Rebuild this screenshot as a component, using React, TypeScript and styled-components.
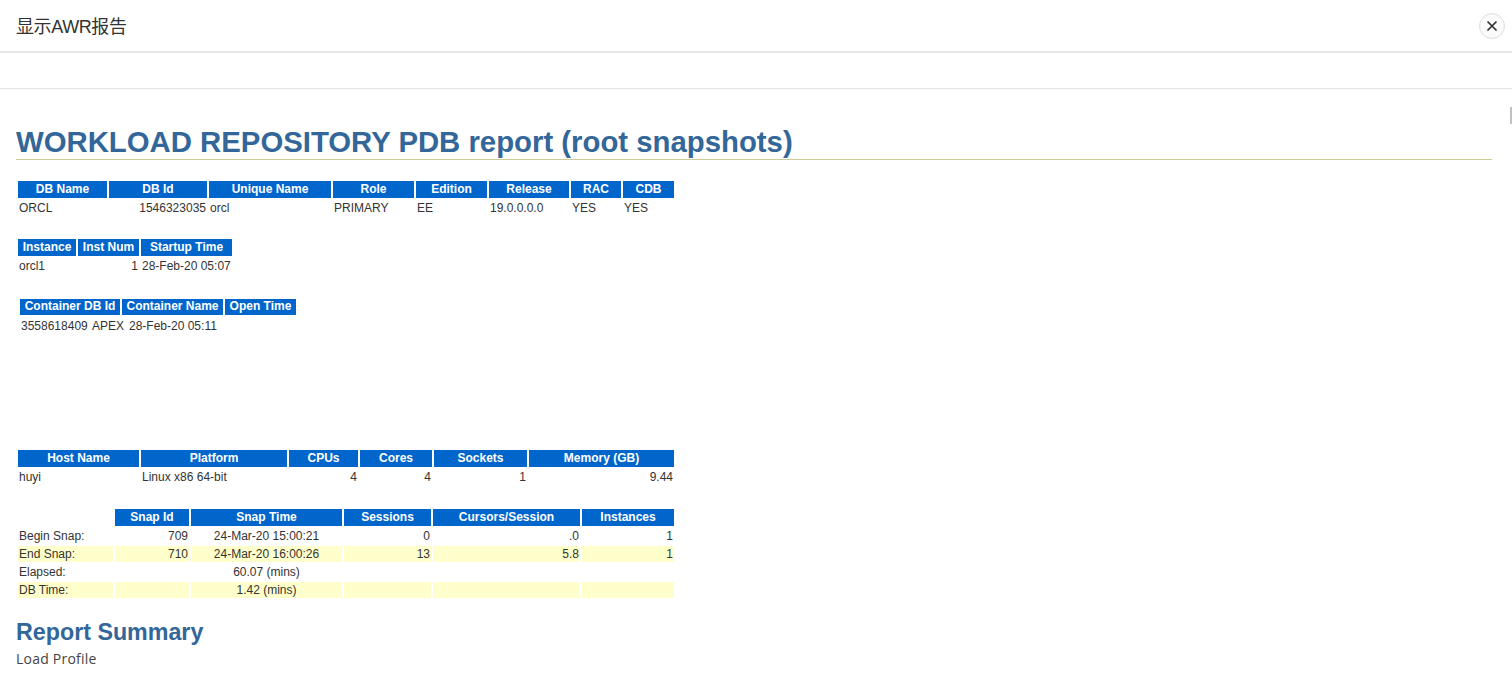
import React from "react";
import styled, { createGlobalStyle } from "styled-components";

const Global = createGlobalStyle`
  html, body { margin: 0; padding: 0; background: #fff; height: 680px; overflow: hidden; }
`;

const Page = styled.div`
  position: relative;
  display: flex;
  flex-direction: column;
  width: 1512px;
  height: 680px;
  overflow: hidden;
  background: #fff;
  font-family: "Liberation Sans", "Noto Sans CJK SC", sans-serif;
`;

const Header = styled.header`
  flex: none;
  height: 51px;
  display: flex;
  align-items: center;
  justify-content: space-between;
  padding: 0 7px 0 16px;
  border-bottom: 2px solid #e5e5e5;
`;

const ModalTitle = styled.h4`
  margin: 0 0 2px;
  font-size: 18px;
  font-weight: 400;
  letter-spacing: -0.4px;
  color: #333;
`;

const CloseButton = styled.button`
  width: 26px;
  height: 26px;
  padding: 0;
  display: flex;
  align-items: center;
  justify-content: center;
  border-radius: 50%;
  border: 1px solid #ddd;
  background: #fafafa;
  color: #333;
`;

const Toolbar = styled.div`
  flex: none;
  height: 35px;
  border-bottom: 1px solid #e5e5e5;
  box-shadow: 0 1px 2px rgba(0, 0, 0, 0.03);
`;

const Report = styled.main`
  flex: 1;
  padding: 0 20px 0 16px;
`;

const Title = styled.h1`
  margin: 35px 0 0;
  height: 35px;
  font-size: 29.33px;
  line-height: 35px;
  font-weight: 700;
  color: #336699;
  border-bottom: 1px solid #cccc99;
`;

const Table = styled.table<{ $top: number; $left?: number }>`
  margin: ${(p) => p.$top}px 0 0 ${(p) => p.$left ?? 0}px;
  border-collapse: separate;
  border-spacing: 2px;
  font-size: 12px;
`;

const Th = styled.th<{ $w: number; $h?: number }>`
  width: ${(p) => p.$w}px;
  min-width: ${(p) => p.$w}px;
  max-width: ${(p) => p.$w}px;
  box-sizing: border-box;
  height: ${(p) => p.$h ?? 17}px;
  padding: 0 0 2px;
  background: #0066cc;
  color: #fff;
  font-weight: 700;
  text-align: center;
  white-space: nowrap;
`;

const Blank = styled.td<{ $w: number }>`
  width: ${(p) => p.$w}px;
  padding: 0;
`;

const Td = styled.td<{ $align?: string; $alt?: boolean; $h?: number; $w?: number }>`
  box-sizing: border-box;
  height: ${(p) => p.$h ?? 16}px;
  ${(p) => (p.$w ? `width: ${p.$w}px; min-width: ${p.$w}px;` : "")}
  padding: 0 1px;
  color: #333;
  white-space: nowrap;
  text-align: ${(p) => p.$align ?? "left"};
  background: ${(p) => (p.$alt ? "#ffffcc" : "transparent")};
`;

const Section = styled.h2`
  margin: 18px 0 0;
  font-size: 23.25px;
  line-height: 28px;
  font-weight: 700;
  color: #336699;
`;

const Sub = styled.div`
  margin-top: 3px;
  font-family: "Open Sans", sans-serif;
  font-size: 14px;
  line-height: 20px;
  letter-spacing: 0.22px;
  color: #444;
`;

const ScrollMark = styled.div`
  position: absolute;
  right: 0;
  top: 107px;
  width: 2px;
  height: 17px;
  background: #c1c1c1;
`;

type Row = (string | [string, string])[];

function Cells({ cells, alt }: { cells: Row; alt?: boolean }) {
  return (
    <tr>
      {cells.map((c, i) =>
        Array.isArray(c) ? (
          <Td key={i} $align={c[1]} $alt={alt}>{c[0]}</Td>
        ) : (
          <Td key={i} $alt={alt}>{c}</Td>
        )
      )}
    </tr>
  );
}

function Heads({ cols, h, blank }: { cols: [string, number][]; h?: number; blank?: number }) {
  return (
    <tr>
      {blank ? <Blank $w={blank} /> : null}
      {cols.map(([t, w]) => (
        <Th key={t} $w={w} $h={h}>{t}</Th>
      ))}
    </tr>
  );
}

export default function App() {
  return (
    <Page>
      <Global />
      <Header>
        <ModalTitle>显示AWR报告</ModalTitle>
        <CloseButton aria-label="关闭">
          <svg width="12" height="12" viewBox="0 0 12 12" fill="none" stroke="currentColor" strokeWidth="1.7">
            <path d="M1.5 1.5l9 9M10.5 1.5l-9 9" />
          </svg>
        </CloseButton>
      </Header>
      <Toolbar />
      <Report>
        <Title>WORKLOAD REPOSITORY PDB report (root snapshots)</Title>
        <Table $top={19}>
          <tbody>
            <Heads cols={[["DB Name", 89], ["DB Id", 98], ["Unique Name", 122], ["Role", 81], ["Edition", 71], ["Release", 80], ["RAC", 50], ["CDB", 51]]} />
            <Cells cells={["ORCL", ["1546323035", "right"], "orcl", "PRIMARY", "EE", "19.0.0.0.0", "YES", "YES"]} />
          </tbody>
        </Table>
        <Table $top={19}>
          <tbody>
            <Heads cols={[["Instance", 58], ["Inst Num", 61], ["Startup Time", 91]]} />
            <Cells cells={["orcl1", ["1", "right"], "28-Feb-20 05:07"]} />
          </tbody>
        </Table>
        <Table $top={21} $left={2}>
          <tbody>
            <Heads h={16} cols={[["Container DB Id", 100], ["Container Name", 101], ["Open Time", 71]]} />
          </tbody>
        </Table>
        <Table $top={0} $left={2}>
          <tbody>
            <tr>
              <Td $h={14} $w={69}>3558618409</Td>
              <Td $h={14} $w={35}>APEX</Td>
              <Td $h={14}>28-Feb-20 05:11</Td>
            </tr>
          </tbody>
        </Table>
        <Table $top={113}>
          <tbody>
            <Heads cols={[["Host Name", 121], ["Platform", 146], ["CPUs", 69], ["Cores", 72], ["Sockets", 93], ["Memory (GB)", 145]]} />
            <Cells cells={["huyi", "Linux x86 64-bit", ["4", "right"], ["4", "right"], ["1", "right"], ["9.44", "right"]]} />
          </tbody>
        </Table>
        <Table $top={20}>
          <tbody>
            <Heads blank={95} cols={[["Snap Id", 74], ["Snap Time", 151], ["Sessions", 87], ["Cursors/Session", 147], ["Instances", 92]]} />
            <Cells cells={["Begin Snap:", ["709", "right"], ["24-Mar-20 15:00:21", "center"], ["0", "right"], [".0", "right"], ["1", "right"]]} />
            <Cells alt cells={["End Snap:", ["710", "right"], ["24-Mar-20 16:00:26", "center"], ["13", "right"], ["5.8", "right"], ["1", "right"]]} />
            <Cells cells={["Elapsed:", "", ["60.07 (mins)", "center"], "", "", ""]} />
            <Cells alt cells={["DB Time:", "", ["1.42 (mins)", "center"], "", "", ""]} />
          </tbody>
        </Table>
        <Section>Report Summary</Section>
        <Sub>Load Profile</Sub>
      </Report>
      <ScrollMark />
    </Page>
  );
}
